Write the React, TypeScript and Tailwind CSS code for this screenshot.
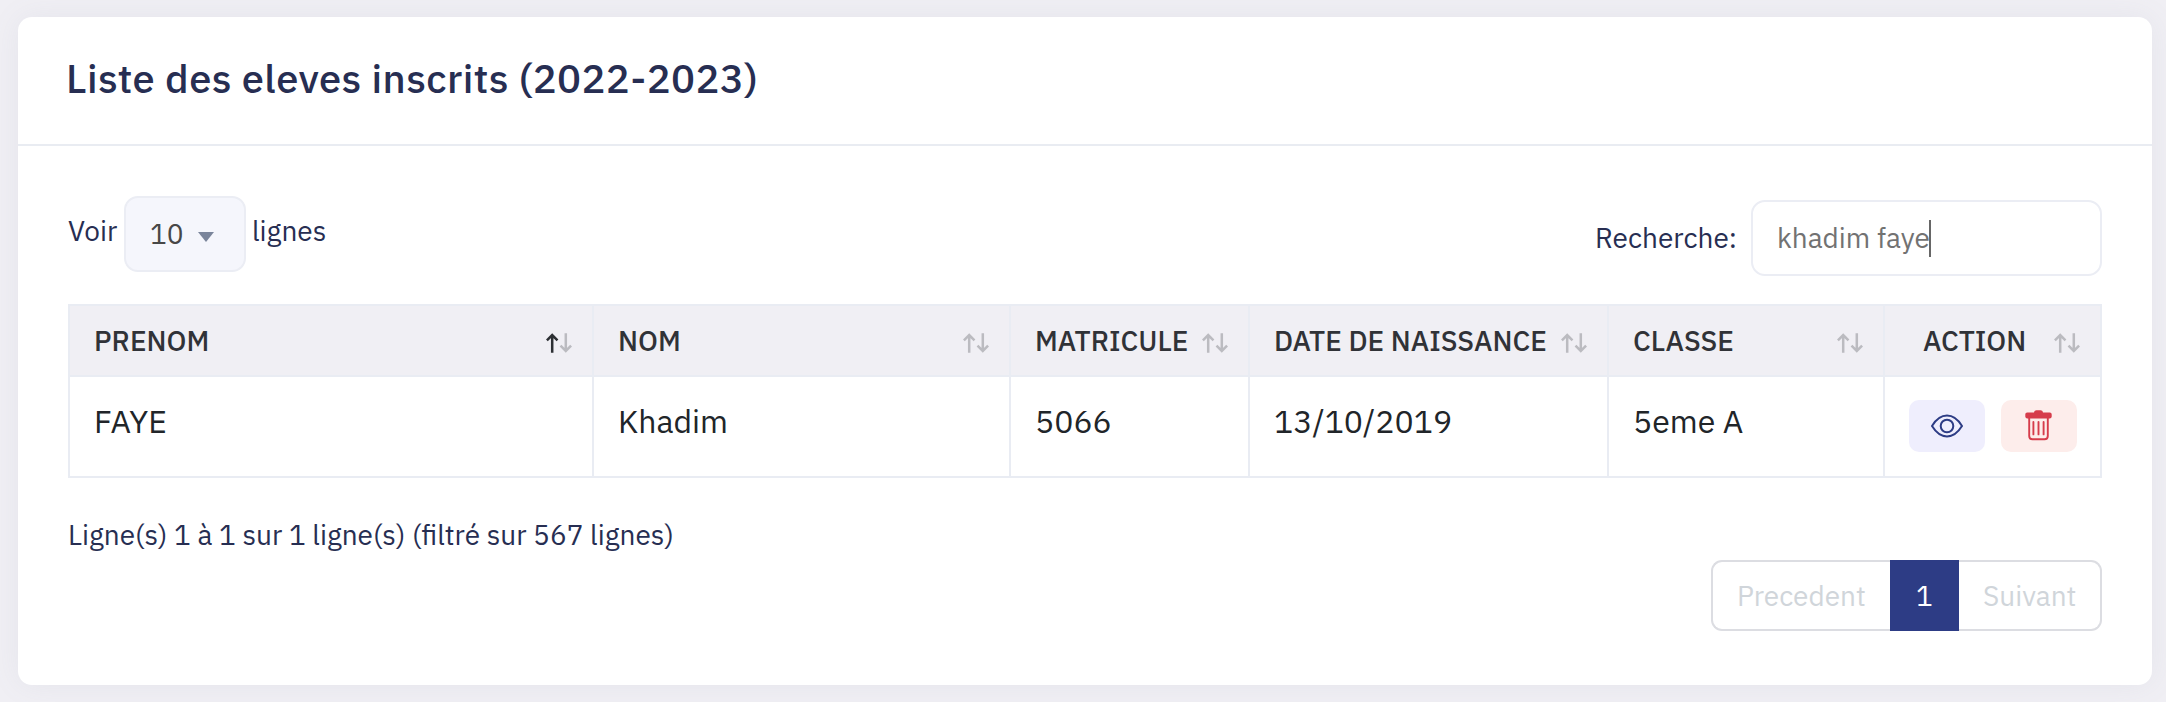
type Sort = "asc" | "none";

const columns: { label: string; sort: Sort; center?: boolean }[] = [
  { label: "PRENOM", sort: "asc" },
  { label: "NOM", sort: "none" },
  { label: "MATRICULE", sort: "none" },
  { label: "DATE DE NAISSANCE", sort: "none" },
  { label: "CLASSE", sort: "none" },
  { label: "ACTION", sort: "none", center: true },
];

const rows = [["FAYE", "Khadim", "5066", "13/10/2019", "5eme A"]];

function SortIcon({ sort }: { sort: Sort }) {
  return (
    <svg width="27" height="20" viewBox="0 0 27 20" fill="none" strokeWidth="2.5" className="mt-[4px] shrink-0">
      <path d="M6.2 19.800V2.200M0.900 7.300 6.200 2l5.300 5.300" stroke={sort === "asc" ? "#2c2f33" : "#bbbbc0"} />
      <path d="M19.800 0.200v17.600M14.500 12.700l5.300 5.300 5.300-5.300" stroke="#bbbbc0" />
    </svg>
  );
}

function EyeIcon() {
  return (
    <svg width="32" height="24" viewBox="0 0 32 24" fill="none" stroke="#2d3c85" strokeWidth="2">
      <path d="M1 12C5.2 5.2 10.2 1.6 16 1.6S26.800 5.2 31 12c-4.200 6.800-9.200 10.400-15 10.400S5.200 18.800 1 12Z" strokeLinejoin="round" />
      <circle cx="16" cy="12" r="6.300" />
    </svg>
  );
}

function TrashIcon() {
  return (
    <svg width="27" height="31" viewBox="0 0 27 31" fill="none">
      <path
        d="M2.200 2.500H9c.3-1.500 1.200-2.200 2.500-2.200h4c1.300 0 2.200.7 2.500 2.200h6.800c1.100 0 1.900.8 1.900 1.900v2.200c0 1.100-.8 1.900-1.900 1.900H2.200C1.100 8.500.3 7.700.3 6.600V4.400c0-1.100.8-1.900 1.900-1.900Z"
        fill="#d63c4b"
      />
      <path d="M4.200 8v18c0 2 1.300 3.300 3.300 3.300h12c2 0 3.300-1.300 3.300-3.300V8" stroke="#d63c4b" strokeWidth="1.900" />
      <path d="M8.400 12v12.400M13.500 12v12.400M18.600 12v12.400" stroke="#d63c4b" strokeWidth="1.900" strokeLinecap="round" />
    </svg>
  );
}

export default function App() {
  return (
    <div className="h-[702px] w-[2166px] overflow-hidden bg-[#f0eff4] pt-[17px] pl-[18px] font-['IBM_Plex_Sans',Roboto,sans-serif] text-[28px] leading-[36px] text-[#272e52]">
      <main className="h-[668px] w-[2134px] rounded-[14px] bg-white shadow-[0_0_30px_rgba(120,130,160,0.09)]">
        <header className="flex h-[129px] items-center border-b-2 border-[#e9ecf2] pb-[6px] pl-[48px]">
          <h1 className="text-[40px] leading-[52px] font-medium tracking-[0.4px]">Liste des eleves inscrits (2022-2023)</h1>
        </header>

        <section className="w-[2084px] pl-[50px]">
          <div className="flex h-[158px] items-start justify-between">
            <div className="flex pt-[50px]">
              <span className="w-[56px] pt-[17px]">Voir</span>
              <div className="flex h-[76px] w-[122px] items-center rounded-[14px] border-2 border-[#ebedf4] bg-[#f5f6fc] pl-[24px] text-[#474747]">
                <span>10</span>
                <svg width="16" height="10" viewBox="0 0 16 10" className="mt-[6px] ml-[14px]">
                  <path d="M0 0h16L8 10Z" fill="#7a859b" />
                </svg>
              </div>
              <span className="pt-[17px] pl-[6px]">lignes</span>
            </div>
            <div className="flex items-center pt-[54px]">
              <span className="mr-[14px]">Recherche:</span>
              <div className="flex h-[76px] w-[351px] items-center rounded-[14px] border-2 border-[#ebedf4] bg-white pl-[24px] text-[#727272]">
                <span>khadim faye</span>
                <span className="-ml-px h-[37px] w-[2px] bg-[#666]" />
              </div>
            </div>
          </div>

          <table className="w-[2034px] table-fixed border-collapse">
            <colgroup>
              <col className="w-[524px]" />
              <col className="w-[417px]" />
              <col className="w-[239px]" />
              <col className="w-[359px]" />
              <col className="w-[276px]" />
              <col className="w-[217px]" />
            </colgroup>
            <thead>
              <tr className="h-[71px] bg-[#f0eff4]">
                {columns.map((c) => (
                  <th key={c.label} className="border-2 border-[#e9ecf3] p-0 text-left font-medium text-[#303237]">
                    <div className={c.center ? "flex items-center justify-between pr-[19px] pl-[38px]" : "flex items-center justify-between pr-[19px] pl-[24px]"}>
                      <span className="whitespace-nowrap">{c.label}</span>
                      <SortIcon sort={c.sort} />
                    </div>
                  </th>
                ))}
              </tr>
            </thead>
            <tbody>
              {rows.map((r) => (
                <tr key={r[2]} className="h-[101px]">
                  {r.map((v) => (
                    <td key={v} className="border-2 border-[#e9ecf3] p-0 pb-[12px] pl-[24px] text-[32px] leading-[42px] text-[#212529]">
                      {v}
                    </td>
                  ))}
                  <td className="border-2 border-[#e9ecf3] p-0 pb-[2px]">
                    <div className="flex gap-4 pl-[24px]">
                      <button className="flex h-[52px] w-[76px] items-center justify-center rounded-[10px] bg-[#efeefd] pr-px">
                        <EyeIcon />
                      </button>
                      <button className="flex h-[52px] w-[76px] items-center justify-center rounded-[10px] bg-[#fdedeb] pr-px pb-px">
                        <TrashIcon />
                      </button>
                    </div>
                  </td>
                </tr>
              ))}
            </tbody>
          </table>

          <p className="pt-[39px]">Ligne(s) 1 à 1 sur 1 ligne(s) (filtré sur 567 lignes)</p>

          <nav className="mt-[7px] flex justify-end text-[#d0d5da]">
            <span className="flex h-[71px] w-[179px] items-center rounded-l-[11px] border-2 border-r-0 border-[#dcdde2] pl-[24px]">Precedent</span>
            <span className="flex h-[71px] w-[69px] items-center justify-center bg-[#2d3c85] text-white">1</span>
            <span className="flex h-[71px] w-[143px] items-center rounded-r-[11px] border-2 border-l-0 border-[#dcdde2] pl-[24px]">Suivant</span>
          </nav>
        </section>
      </main>
    </div>
  );
}
